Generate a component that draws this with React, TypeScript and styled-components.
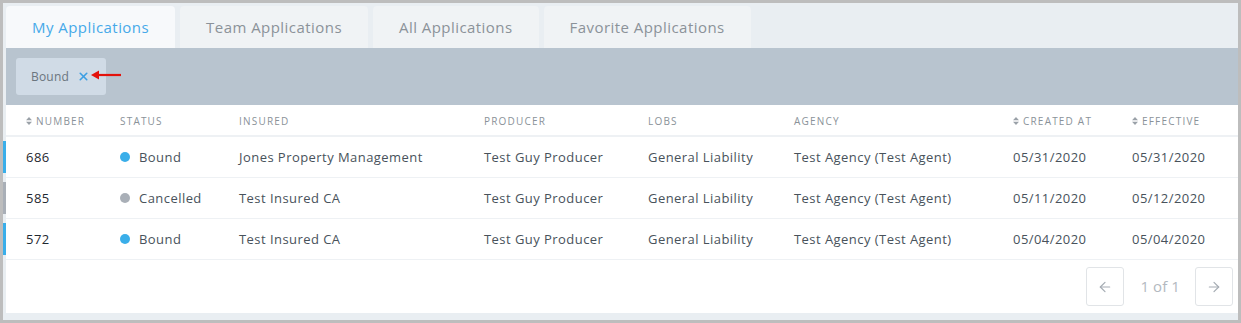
import styled, { createGlobalStyle } from "styled-components";
import { ArrowLeft, ArrowRight, X } from "lucide-react";

const GlobalStyle = createGlobalStyle`
    html, body {
        margin: 0;
        padding: 0;
    }
    body {
        font-family: "Open Sans", "Liberation Sans", sans-serif;
        background: #bdbdbd;
    }
    * { box-sizing: border-box; }
`;

const Frame = styled.div`
    width: 1241px;
    height: 323px;
    border: 3px solid #bdbdbd;
    background: #e9eef2;
    padding: 3px 0 0 0;
    display: flex;
    flex-direction: column;
`;

const Panel = styled.div`
    margin-left: 3px;
    display: flex;
    flex-direction: column;
`;

const Tabs = styled.div`
    display: flex;
    gap: 5px;
    height: 42px;
`;

const Tab = styled.div<{ $active?: boolean }>`
    padding: 0 26px 0 26px;
    display: flex;
    align-items: center;
    border-radius: 4px 4px 0 0;
    font-size: 15px;
    letter-spacing: 0.45px;
    background: ${p => (p.$active ? "#f7f9fb" : "#f0f3f5")};
    color: ${p => (p.$active ? "#46a9e9" : "#8b9299")};
`;

const FilterBar = styled.div`
    height: 57px;
    background: #b8c4cf;
    padding: 10px 10px;
    display: flex;
    align-items: flex-start;
    position: relative;
`;

const Chip = styled.div`
    height: 37px;
    width: 90px;
    padding: 0 15px;
    border-radius: 3px;
    background: #d0dbe6;
    display: flex;
    align-items: center;
    gap: 8px;
    font-size: 12px;
    letter-spacing: 0.2px;
    color: #6b757e;
`;

const Annotation = styled.svg`
    position: absolute;
    left: 85px;
    top: 22px;
`;

const Table = styled.div`
    background: #fff;
`;

const cols = "94px 119px 245px 164px 146px 219px 119px 1fr";

const HeadRow = styled.div`
    display: grid;
    grid-template-columns: ${cols};
    height: 32px;
    padding: 1px 0 0 20px;
    align-items: center;
    border-bottom: 2px solid #eef1f4;
`;

const HeadCell = styled.div`
    font-size: 10px;
    letter-spacing: 1.2px;
    color: #8a9299;
    text-transform: uppercase;
    display: flex;
    align-items: center;
    gap: 4px;
`;

const SortIcon = styled.svg`
    flex: none;
`;

const Row = styled.div<{ $mark: string }>`
    position: relative;
    display: grid;
    grid-template-columns: ${cols};
    height: 41px;
    padding-left: 20px;
    align-items: center;
    border-bottom: 1px solid #eef1f4;
    font-size: 13px;
    letter-spacing: 0.45px;
    color: #48525b;
    &::before {
        content: "";
        position: absolute;
        left: -3px;
        top: 4px;
        bottom: 4px;
        width: 3px;
        background: ${p => p.$mark};
    }
`;

const NumberCell = styled.div`
    color: #1f2830;
`;

const Status = styled.div`
    display: flex;
    align-items: center;
    gap: 9px;
`;

const Dot = styled.span<{ $color: string }>`
    width: 10px;
    height: 10px;
    border-radius: 50%;
    background: ${p => p.$color};
`;

const Pager = styled.div`
    height: 53px;
    display: flex;
    justify-content: flex-end;
    align-items: flex-start;
    padding: 7px 5px 0 0;
    gap: 15px;
`;

const PageButton = styled.div`
    width: 38px;
    height: 39px;
    border: 1px solid #e1e4e7;
    border-radius: 3px;
    display: flex;
    align-items: center;
    justify-content: center;
    color: #a5acb3;
`;

const PageText = styled.div`
    font-size: 15px;
    letter-spacing: 0.1px;
    color: #b3b9bf;
    line-height: 39px;
    padding-left: 1px;
`;

const Sort = () => (
    <SortIcon width="6" height="8" viewBox="0 0 6 8">
        <path d="M3 0 L6 3.2 H0 Z M3 8 L6 4.8 H0 Z" fill="#9aa1a8" />
    </SortIcon>
);

const rows = [
    { num: "686", status: "Bound", insured: "Jones Property Management", created: "05/31/2020", effective: "05/31/2020" },
    { num: "585", status: "Cancelled", insured: "Test Insured CA", created: "05/11/2020", effective: "05/12/2020" },
    { num: "572", status: "Bound", insured: "Test Insured CA", created: "05/04/2020", effective: "05/04/2020" },
];

function App() {
    return (
        <>
            <GlobalStyle />
            <Frame>
                <Panel>
                    <Tabs>
                        <Tab $active>My Applications</Tab>
                        <Tab>Team Applications</Tab>
                        <Tab>All Applications</Tab>
                        <Tab>Favorite Applications</Tab>
                    </Tabs>
                    <FilterBar>
                        <Chip>
                            Bound
                            <X size={13} strokeWidth={3} color="#3b9fe3" />
                        </Chip>
                        <Annotation width="30" height="10" viewBox="0 0 30 10">
                            <path d="M6 5 H30" stroke="#e3120b" strokeWidth="2.2" />
                            <path d="M0 5 L8 0.5 L8 9.5 Z" fill="#e3120b" />
                        </Annotation>
                    </FilterBar>
                    <Table>
                        <HeadRow>
                            <HeadCell><Sort />Number</HeadCell>
                            <HeadCell>Status</HeadCell>
                            <HeadCell>Insured</HeadCell>
                            <HeadCell>Producer</HeadCell>
                            <HeadCell>Lobs</HeadCell>
                            <HeadCell>Agency</HeadCell>
                            <HeadCell><Sort />Created At</HeadCell>
                            <HeadCell><Sort />Effective</HeadCell>
                        </HeadRow>
                        {rows.map(r => {
                            const color = r.status === "Bound" ? "#3aaee9" : "#a9afb7";
                            return (
                                <Row key={r.num} $mark={color}>
                                    <NumberCell>{r.num}</NumberCell>
                                    <Status><Dot $color={color} />{r.status}</Status>
                                    <div>{r.insured}</div>
                                    <div>Test Guy Producer</div>
                                    <div>General Liability</div>
                                    <div>Test Agency (Test Agent)</div>
                                    <div>{r.created}</div>
                                    <div>{r.effective}</div>
                                </Row>
                            );
                        })}
                        <Pager>
                            <PageButton><ArrowLeft size={16} strokeWidth={1.8} /></PageButton>
                            <PageText>1 of 1</PageText>
                            <PageButton><ArrowRight size={16} strokeWidth={1.8} /></PageButton>
                        </Pager>
                    </Table>
                </Panel>
            </Frame>
        </>
    );
}

export default App;
